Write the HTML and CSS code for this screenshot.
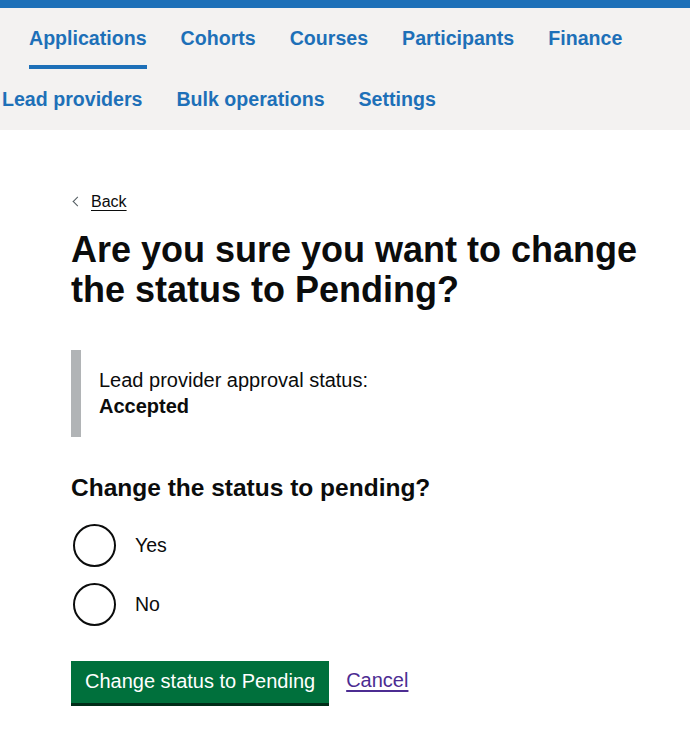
FILE: index.html
```html
<!DOCTYPE html>
<html lang="en">
<head>
<meta charset="utf-8">
<title>Change status</title>
<link rel="stylesheet" href="styles.css">
</head>
<body>
<header class="topbar"></header>
<nav class="primary-nav">
  <ul class="nav-list">
    <li class="nav-item nav-item--first"><a class="nav-link nav-link--active" href="#">Applications</a></li>
    <li class="nav-item"><a class="nav-link" href="#">Cohorts</a></li>
    <li class="nav-item"><a class="nav-link" href="#">Courses</a></li>
    <li class="nav-item"><a class="nav-link" href="#">Participants</a></li>
    <li class="nav-item"><a class="nav-link" href="#">Finance</a></li>
    <li class="nav-break" aria-hidden="true"></li>
    <li class="nav-item"><a class="nav-link" href="#">Lead providers</a></li>
    <li class="nav-item"><a class="nav-link" href="#">Bulk operations</a></li>
    <li class="nav-item"><a class="nav-link" href="#">Settings</a></li>
  </ul>
</nav>
<main class="main">
  <a class="back-link" href="#"><span class="chevron"></span>Back</a>
  <h1 class="heading-l">Are you sure you want to change the status to Pending?</h1>
  <div class="inset">
    <p class="inset-line">Lead provider approval status:</p>
    <p class="inset-line inset-strong">Accepted</p>
  </div>
  <form class="form">
    <fieldset class="fieldset">
      <legend class="heading-m">Change the status to pending?</legend>
      <div class="radios">
        <label class="radio"><input type="radio" name="s" class="radio-input"><span class="radio-circle"></span><span class="radio-label">Yes</span></label>
        <label class="radio"><input type="radio" name="s" class="radio-input"><span class="radio-circle"></span><span class="radio-label">No</span></label>
      </div>
    </fieldset>
    <div class="actions">
      <button type="button" class="button">Change status to Pending</button>
      <a class="cancel" href="#">Cancel</a>
    </div>
  </form>
</main>
</body>
</html>
```
FILE: styles.css
```css
* { box-sizing: border-box; }
html, body { margin: 0; padding: 0; background: #fff; }
body {
  font-family: "Liberation Sans", Arial, sans-serif;
  color: #0b0c0c;
}
.topbar {
  height: 8px;
  background: #1d70b8;
}
.primary-nav {
  background: #f3f2f1;
}
.nav-list {
  list-style: none;
  margin: 0;
  padding: 0 0 0 2px;
  display: flex;
  flex-wrap: wrap;
}
.nav-item { margin-right: 34px; }
.nav-item--first { margin-left: 27px; }
.nav-break { flex-basis: 100%; height: 0; }
.nav-link {
  display: block;
  padding: 18px 0 14px;
  font-size: 19.6px;
  line-height: 25px;
  font-weight: 700;
  color: #1d70b8;
  text-decoration: none;
  border-bottom: 4px solid transparent;
}
.nav-link--active { border-bottom-color: #1d70b8; }

.main {
  padding: 61px 30px 40px 71px;
}
.back-link {
  display: inline-flex;
  align-items: center;
  font-size: 16px;
  line-height: 20px;
  color: #0b0c0c;
  text-decoration: underline;
  text-underline-offset: 3px;
}
.chevron {
  display: inline-block;
  width: 7px;
  height: 7px;
  border-left: 1px solid #505a5f;
  border-bottom: 1px solid #505a5f;
  transform: rotate(45deg);
  margin: 0 10px 0 3px;
}
.heading-l {
  margin: 18px 0 0;
  font-size: 36px;
  line-height: 40px;
  font-weight: 700;
}
.inset {
  margin-top: 40px;
  border-left: 10px solid #b1b4b6;
  padding: 17px 0 18px 18px;
}
.inset-line {
  margin: 0;
  font-size: 20px;
  line-height: 26px;
}
.inset-strong { font-weight: 700; }
.form { margin: 0; }
.fieldset {
  border: 0;
  margin: 36px 0 0;
  padding: 0;
  min-width: 0;
}
.heading-m {
  padding: 0;
  margin: 0;
  font-size: 24.5px;
  line-height: 30px;
  font-weight: 700;
}
.radios {
  margin-top: 22px;
  display: flex;
  flex-direction: column;
  gap: 17px;
}
.radio {
  display: flex;
  align-items: center;
  height: 42px;
}
.radio-input {
  position: absolute;
  opacity: 0;
  width: 0;
  height: 0;
}
.radio-circle {
  width: 43px;
  height: 43px;
  border: 2px solid #0b0c0c;
  border-radius: 50%;
  margin-left: 2px;
  flex: none;
}
.radio-label {
  margin-left: 19px;
  font-size: 19.5px;
  line-height: 25px;
}
.actions {
  margin-top: 35px;
  display: flex;
  align-items: center;
  gap: 17px;
}
.button {
  font-family: "Liberation Sans", Arial, sans-serif;
  font-size: 20px;
  line-height: 25px;
  color: #fff;
  background: #00703c;
  border: 0;
  border-radius: 0;
  padding: 8px 14px 9px;
  box-shadow: 0 3px 0 #002d18;
  cursor: pointer;
}
.cancel {
  font-size: 20px;
  line-height: 25px;
  color: #4c2c92;
  text-decoration: underline;
  text-underline-offset: 3px;
  margin-top: -3px;
}
```
